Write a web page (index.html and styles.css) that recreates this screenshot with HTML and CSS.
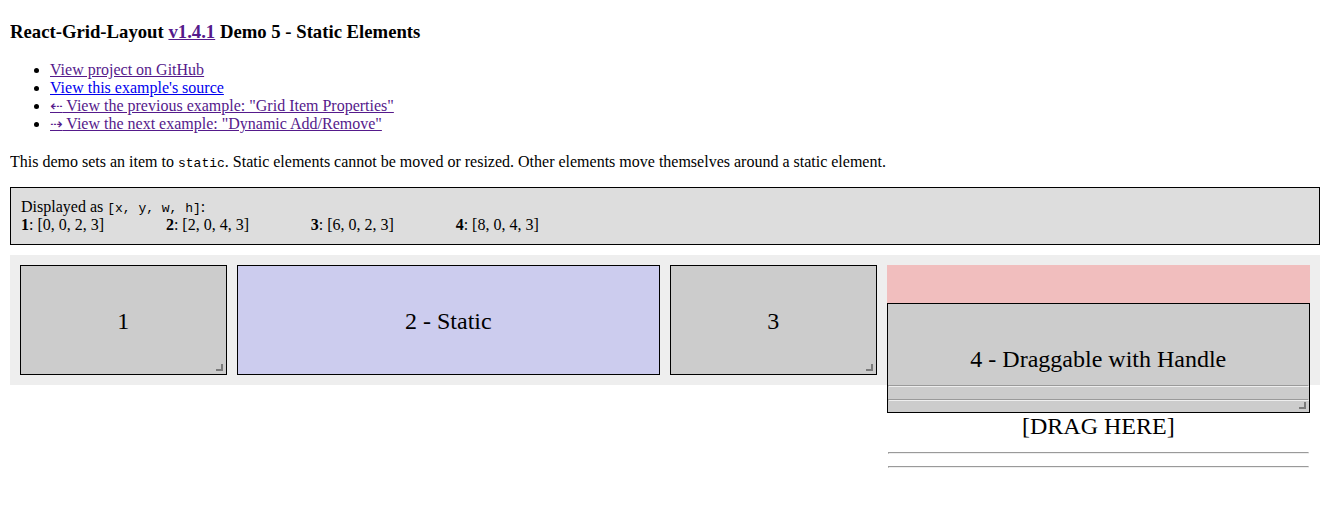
FILE: index.html
```html
<!DOCTYPE html>
<html lang="en">
<head>
  <meta charset="UTF-8">
  <title>React-Grid-Layout Demo 5 - Static Elements</title>
  <link rel="stylesheet" href="styles.css">
</head>
<body>
  <h3 class="title">React-Grid-Layout <a class="visited" href="#">v1.4.1</a> Demo 5 - Static Elements</h3>
  <ul class="links">
    <li><a class="visited" href="#">View project on GitHub</a></li>
    <li><a href="#">View this example's source</a></li>
    <li><a class="visited" href="#"><span class="arrow">&#8672;</span> View the previous example: "Grid Item Properties"</a></li>
    <li><a class="visited" href="#"><span class="arrow">&#8674;</span> View the next example: "Dynamic Add/Remove"</a></li>
  </ul>
  <p class="intro">This demo sets an item to <code>static</code>. Static elements cannot be moved or resized. Other elements move themselves around a static element.</p>

  <div class="layout-json">
    Displayed as <code>[x, y, w, h]</code>:
    <div class="columns">
      <div class="layout-item"><b>1</b>: [0, 0, 2, 3]</div>
      <div class="layout-item"><b>2</b>: [2, 0, 4, 3]</div>
      <div class="layout-item"><b>3</b>: [6, 0, 2, 3]</div>
      <div class="layout-item"><b>4</b>: [8, 0, 4, 3]</div>
    </div>
  </div>

  <div class="grid">
    <div class="grid-item x0">
      <span class="text">1</span>
      <span class="resize-handle"></span>
    </div>
    <div class="grid-item static x2">
      <span class="text">2 - Static</span>
    </div>
    <div class="grid-item x6">
      <span class="text">3</span>
      <span class="resize-handle"></span>
    </div>
    <div class="placeholder x8"></div>
    <div class="grid-item moving x8">
      <span class="text">
        4 - Draggable with Handle
        <hr>
        <hr>
        <span class="drag-handle">[DRAG HERE]</span>
        <hr>
        <hr>
      </span>
      <span class="resize-handle"></span>
    </div>
  </div>
</body>
</html>
```

FILE: styles.css
```css
html {
  min-height: 100%;
}
body {
  margin: 8px 8px 8px 10px;
  min-height: calc(100vh - 16px);
  font-family: "Liberation Serif", "Times New Roman", serif;
  font-size: 16px;
  color: #000;
}
a {
  color: #0000ee;
}
a.visited {
  color: #551a8b;
}
.arrow {
  font-family: "DejaVu Sans", sans-serif;
  font-size: 15px;
}
code {
  font-family: "Liberation Mono", "DejaVu Sans Mono", monospace;
  font-size: 13px;
}
.title {
  font-size: 18.72px;
  margin: 0 0 18px;
  padding-top: 13px;
}
.links {
  margin: 0 0 16px;
  padding-left: 40px;
}
.links li {
  line-height: 18px;
}
.intro {
  margin: 20px 0 16px;
}
.layout-json {
  background: #ddd;
  border: 1px solid black;
  padding: 10px;
  margin-top: 10px;
}
.columns {
  columns: 120px;
}
.grid {
  margin-top: 10px;
  background: #eee;
  padding: 10px;
  display: grid;
  grid-template-columns: repeat(12, 1fr);
  grid-template-rows: repeat(3, 30px);
  gap: 10px;
}
.x0 { grid-column: 1 / span 2; }
.x2 { grid-column: 3 / span 4; }
.x6 { grid-column: 7 / span 2; }
.x8 { grid-column: 9 / span 4; }
.grid-item,
.placeholder {
  grid-row: 1 / span 3;
}
.grid-item {
  position: relative;
  background: #ccc;
  border: 1px solid black;
  display: flex;
  align-items: center;
  justify-content: center;
  text-align: center;
}
.grid-item.static {
  background: #cce;
}
.placeholder {
  background: red;
  opacity: 0.2;
}
/* item 4 is mid-drag, sitting lower than its placeholder */
.grid-item.moving {
  margin-top: 38px;
  margin-bottom: -38px;
  z-index: 2;
}
.text {
  font-size: 24px;
  height: 24px;
  width: 100%;
}
.drag-handle {
  display: block;
}
.resize-handle {
  position: absolute;
  right: 0;
  bottom: 0;
  width: 20px;
  height: 20px;
}
.resize-handle::after {
  content: "";
  position: absolute;
  right: 3px;
  bottom: 3px;
  width: 5px;
  height: 5px;
  border-right: 2px solid rgba(0, 0, 0, 0.4);
  border-bottom: 2px solid rgba(0, 0, 0, 0.4);
}
```
